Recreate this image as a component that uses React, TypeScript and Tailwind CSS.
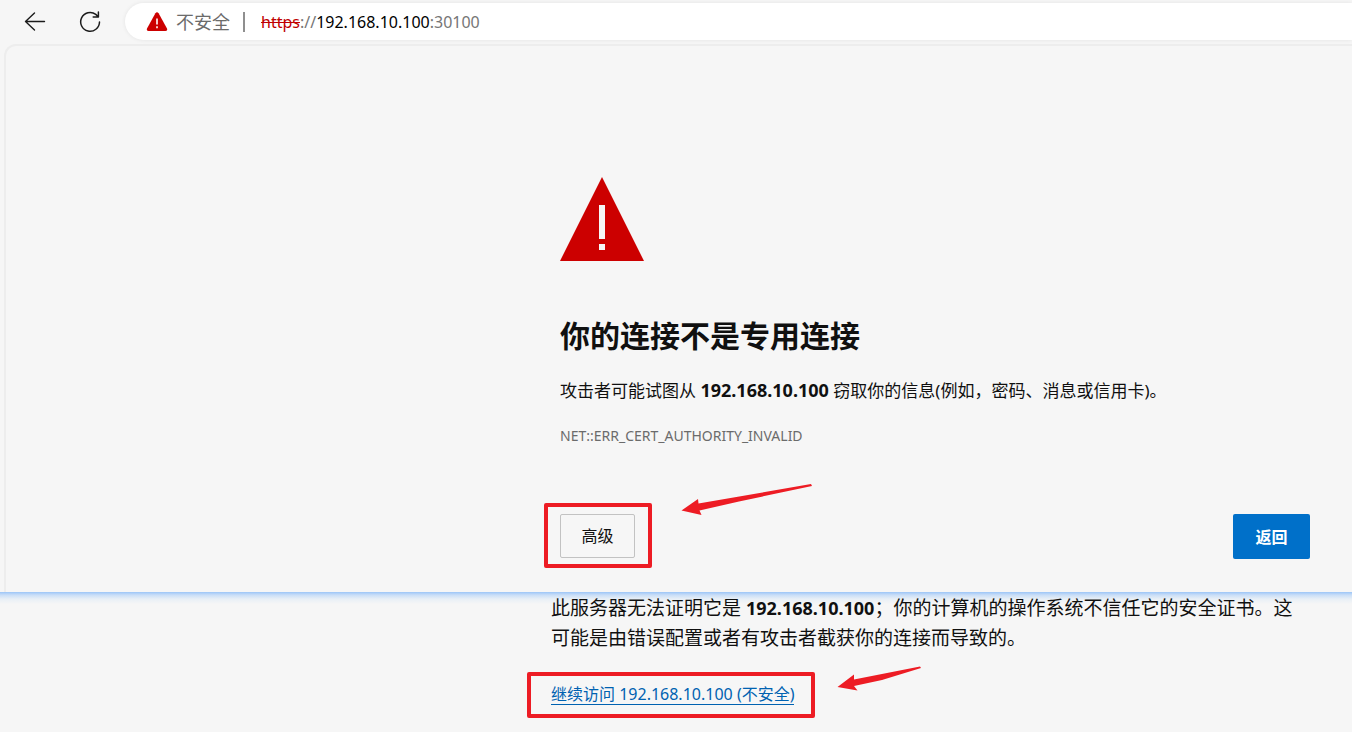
import React from 'react';

const HOST = '192.168.10.100';

interface ArrowProps {
  className: string;
  points: string;
  viewBox: string;
}

const Arrow: React.FC<ArrowProps> = ({ className, points, viewBox }) => (
  <svg className={className} viewBox={viewBox} fill="#ed1c24" aria-hidden="true">
    <polygon points={points} />
  </svg>
);

const AddressBar: React.FC = () => {
  return (
    <header className="flex items-center h-11 pt-[3px] pb-1">
      <button aria-label="返回上一页" className="ml-6 w-[22px] h-[22px] shrink-0">
        <svg viewBox="0 0 22 22" fill="none" stroke="#1b1b1b" strokeWidth="1.4" strokeLinecap="round" strokeLinejoin="round">
          <path d="M20.5 10.5H1.5M10.5 2L1.5 10.5L10.5 19" />
        </svg>
      </button>
      <button aria-label="刷新" className="ml-[33px] w-[22px] h-[22px] shrink-0">
        <svg viewBox="0 0 22 22" fill="none" stroke="#1b1b1b" strokeWidth="1.5" strokeLinecap="round" strokeLinejoin="round">
          <path d="M20.5 11A9.4 9.4 0 1 1 16.8 3.4L19.2 5.7M19.4 1.1V5.9H14.2" />
        </svg>
      </button>
      <div className="flex flex-1 items-center h-[37px] ml-6 pl-[21px] bg-white rounded-l-full shadow-[0_0_4px_rgba(0,0,0,0.08)] whitespace-nowrap">
        <svg className="w-[22px] h-5 shrink-0" viewBox="0 0 22 20" aria-hidden="true">
          <path d="M9.4 1.2Q11 -0.8 12.6 1.2L21 16.6Q21.6 19 19.4 19.1H2.6Q0.4 19 1 16.6Z" fill="#c00" />
          <path d="M11 6.5V12.5M11 14.3V16.3" stroke="#fff" strokeWidth="1.6" />
        </svg>
        <span className="ml-2 text-lg text-[#6b6b6b]">不安全</span>
        <span className="w-[2px] h-5 ml-[13px] mr-4 bg-[#8f8f8f]" />
        <span className="text-base text-[#767676]">
          <span className="text-[#c00000] line-through">https</span>://
          <span className="text-black">{HOST}</span>:30100
        </span>
      </div>
    </header>
  );
};

const Warning: React.FC = () => {
  return (
    <main className="ml-1 pt-[131px] pb-[33px] border-t-2 border-l-2 border-[#ededed] rounded-tl-xl">
      <div className="max-w-[750px] ml-auto mr-[42px]">
        <svg className="w-[84px] h-[84px]" viewBox="0 0 84 84" aria-hidden="true">
          <path d="M42 0L84 84H0Z" fill="#c00" />
          <path d="M39 28H45V62H39ZM39 67H45V73H39Z" fill="#f6f6f6" />
        </svg>
        <h1 className="mt-[53px] text-[30px] leading-[44px] font-bold">你的连接不是专用连接</h1>
        <p className="mt-[18px] text-[17px] leading-[30px]">
          攻击者可能试图从 <strong className="text-lg leading-none">{HOST}</strong> 窃取你的信息(例如，密码、消息或信用卡)。
        </p>
        <p className="mt-[19px] text-sm leading-[22px] text-[#6b6b6b]">NET::ERR_CERT_AUTHORITY_INVALID</p>
        <div className="flex items-start justify-between mt-[67px]">
          <div className="relative">
            <button className="block w-[75px] h-11 border border-[#c2c2c2] rounded-[2px] text-base">高级</button>
            <div className="absolute -left-4 -top-[11px] w-[108px] h-[65px] border-4 border-[#ed1c24] rounded-[2px] pointer-events-none" />
            <Arrow
              className="absolute left-[121px] -top-[31px] w-[132px] h-[34px]"
              viewBox="0 0 132 34"
              points="0.5,27.5 17,16 17.5,20.5 130,1 131,3 58,18.5 18.5,27.5 20.5,32"
            />
          </div>
          <button className="w-[77px] h-[45px] bg-[#0070c9] rounded-[2px] text-base font-bold text-white">返回</button>
        </div>
      </div>
    </main>
  );
};

const Details: React.FC = () => {
  return (
    <section className="pt-px pb-6 bg-[linear-gradient(#9cc5f7,#c9def7_3px,#e8eff6_7px,#f6f6f6_12px)]">
      <div className="max-w-[750px] ml-auto mr-[51px]">
        <p className="text-[19px] leading-[30px]">
          此服务器无法证明它是 <strong className="text-lg leading-none">{HOST}</strong>；你的计算机的操作系统不信任它的安全证书。这可能是由错误配置或者有攻击者截获你的连接而导致的。
        </p>
        <div className="relative w-fit mt-[31px]">
          <a href="#proceed" className="block border-b border-[#0062b1] text-base leading-5 text-[#0062b1]">
            继续访问 {HOST} (不安全)
          </a>
          <div className="absolute -left-6 -top-3 w-[288px] h-[46px] border-4 border-[#ed1c24] rounded-[2px] pointer-events-none" />
          <Arrow
            className="absolute left-[286px] -top-[18px] w-[84px] h-[26px]"
            viewBox="0 0 84 26"
            points="0.5,21 17,8.5 17,13.5 83,0.5 84,2 45,14 17,20 20.5,24.5"
          />
        </div>
      </div>
    </section>
  );
};

const App: React.FC = () => {
  return (
    <div className="min-h-screen overflow-x-hidden bg-[#f6f6f6] text-[#101010] font-['Noto_Sans','Noto_Sans_CJK_SC',sans-serif]">
      <AddressBar />
      <Warning />
      <Details />
    </div>
  );
};

export default App;
